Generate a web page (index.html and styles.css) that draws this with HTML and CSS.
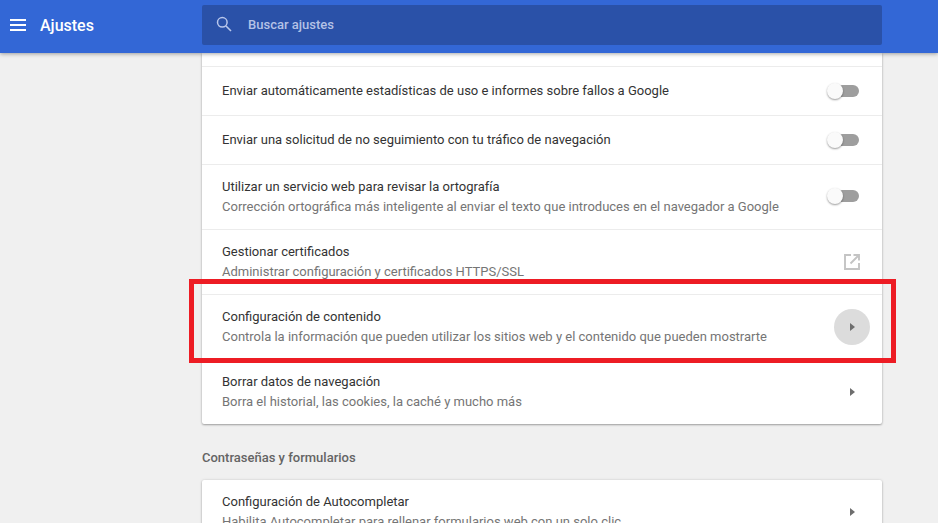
FILE: index.html
```html
<!DOCTYPE html>
<html lang="es">
<head>
<meta charset="utf-8">
<title>Ajustes</title>
<link rel="stylesheet" href="styles.css">
</head>
<body>
<header class="topbar">
  <div class="brand">
    <svg class="menu-icon" width="16" height="12" viewBox="0 0 16 12"><path d="M0 0h16v2H0zM0 5h16v2H0zM0 10h16v2H0z" fill="#fff"/></svg>
    <span class="brand-title">Ajustes</span>
  </div>
  <div class="search">
    <svg class="search-icon" width="16" height="16" viewBox="0 0 16 16"><circle cx="6.3" cy="6.3" r="4.8" fill="none" stroke="#b9c7ec" stroke-width="1.5"/><path d="M10 10l5 5" stroke="#b9c7ec" stroke-width="1.6" fill="none"/></svg>
    <span class="search-text">Buscar ajustes</span>
  </div>
</header>
<main class="content">
  <section class="card first">
    <div class="row short">
      <div class="text"><div class="title">Enviar automáticamente estadísticas de uso e informes sobre fallos a Google</div></div>
      <div class="toggle"><span class="knob"></span></div>
    </div>
    <div class="row short">
      <div class="text"><div class="title">Enviar una solicitud de no seguimiento con tu tráfico de navegación</div></div>
      <div class="toggle"><span class="knob"></span></div>
    </div>
    <div class="row">
      <div class="text">
        <div class="title">Utilizar un servicio web para revisar la ortografía</div>
        <div class="sub">Corrección ortográfica más inteligente al enviar el texto que introduces en el navegador a Google</div>
      </div>
      <div class="toggle raised"><span class="knob"></span></div>
    </div>
    <div class="row">
      <div class="text">
        <div class="title">Gestionar certificados</div>
        <div class="sub">Administrar configuración y certificados HTTPS/SSL</div>
      </div>
      <svg class="ext-icon" width="16" height="16" viewBox="0 0 16 16"><path d="M7 1H1v14h14V9" fill="none" stroke="#c4c4c4" stroke-width="1.9"/><path d="M9.5 1H15v5.5M15 1L6.5 9.5" fill="none" stroke="#c4c4c4" stroke-width="1.9"/></svg>
    </div>
    <div class="row">
      <div class="text">
        <div class="title">Configuración de contenido</div>
        <div class="sub">Controla la información que pueden utilizar los sitios web y el contenido que pueden mostrarte</div>
      </div>
      <div class="arrow-btn hover"><span class="arrow"></span></div>
    </div>
    <div class="row">
      <div class="text">
        <div class="title">Borrar datos de navegación</div>
        <div class="sub">Borra el historial, las cookies, la caché y mucho más</div>
      </div>
      <div class="arrow-btn"><span class="arrow"></span></div>
    </div>
  </section>
  <h2 class="section-title">Contraseñas y formularios</h2>
  <section class="card">
    <div class="row first-row">
      <div class="text">
        <div class="title">Configuración de Autocompletar</div>
        <div class="sub">Habilita Autocompletar para rellenar formularios web con un solo clic</div>
      </div>
      <div class="arrow-btn"><span class="arrow"></span></div>
    </div>
  </section>
</main>
<div class="highlight"></div>
</body>
</html>
```
FILE: styles.css
```css
html, body {
  margin: 0;
  height: 100%;
  overflow: hidden;
}
body {
  background: #f0f0f0;
  font-family: Roboto, "Liberation Sans", sans-serif;
  font-size: 13px;
  color: #333;
}
.topbar {
  position: relative;
  z-index: 2;
  display: flex;
  align-items: center;
  height: 53px;
  background: #3367d6;
  box-shadow: 0 1px 4px rgba(0, 0, 0, .35);
  padding-right: 56px;
  box-sizing: border-box;
}
.brand {
  display: flex;
  align-items: center;
  width: 202px;
  flex: none;
  padding-left: 10px;
  box-sizing: border-box;
  margin-top: -3px;
}
.brand-title {
  margin-left: 14px;
  color: #fff;
  font-size: 16px;
  font-weight: 500;
}
.search {
  flex: 1;
  display: flex;
  align-items: center;
  height: 40px;
  margin-top: -3px;
  background: #2a51a8;
  border-radius: 2px;
  padding: 0 0 2px 14px;
  box-sizing: border-box;
}
.search-text {
  margin-left: 16px;
  color: #b4c2e6;
  font-size: 13px;
  font-weight: 500;
}
.content {
  width: 680px;
  margin-left: 202px;
}
.card {
  background: #fff;
  border-radius: 2px;
  box-shadow: 0 1px 2px rgba(0, 0, 0, .3), 0 0 3px rgba(0, 0, 0, .12);
}
.card.first {
  padding-top: 13px;
  border-radius: 0 0 2px 2px;
}
.row {
  display: flex;
  align-items: center;
  justify-content: space-between;
  height: 65px;
  box-sizing: border-box;
  padding: 0 12px 0 20px;
  border-top: 1px solid #ececec;
}
.row.short {
  height: 49px;
}
.row.first-row {
  border-top: 0;
  height: 63px;
}
.title {
  color: #333;
  line-height: 20px;
}
.sub {
  color: #757575;
  line-height: 20px;
}
.toggle {
  position: relative;
  width: 24px;
  height: 12px;
  margin-right: 11px;
  border-radius: 6px;
  background: #9e9e9e;
}
.toggle.raised {
  margin-bottom: 2px;
}
.knob {
  position: absolute;
  left: -8px;
  top: -2px;
  width: 16px;
  height: 16px;
  border-radius: 50%;
  background: #fafafa;
  box-shadow: 0 1px 2px rgba(0, 0, 0, .4);
}
.ext-icon {
  margin-right: 10px;
}
.arrow-btn {
  display: flex;
  align-items: center;
  justify-content: center;
  width: 36px;
  height: 36px;
  border-radius: 50%;
}
.arrow-btn.hover {
  background: #dcdcdc;
}
.arrow {
  width: 0;
  height: 0;
  border-left: 5px solid #6e6e6e;
  border-top: 4.5px solid transparent;
  border-bottom: 4.5px solid transparent;
}
.section-title {
  margin: 0;
  height: 56px;
  line-height: 68px;
  font-size: 13px;
  font-weight: 500;
  color: #646464;
}
.highlight {
  position: absolute;
  left: 189px;
  top: 279px;
  width: 697px;
  height: 74px;
  border: 5px solid #ed1c24;
  z-index: 3;
}
```
